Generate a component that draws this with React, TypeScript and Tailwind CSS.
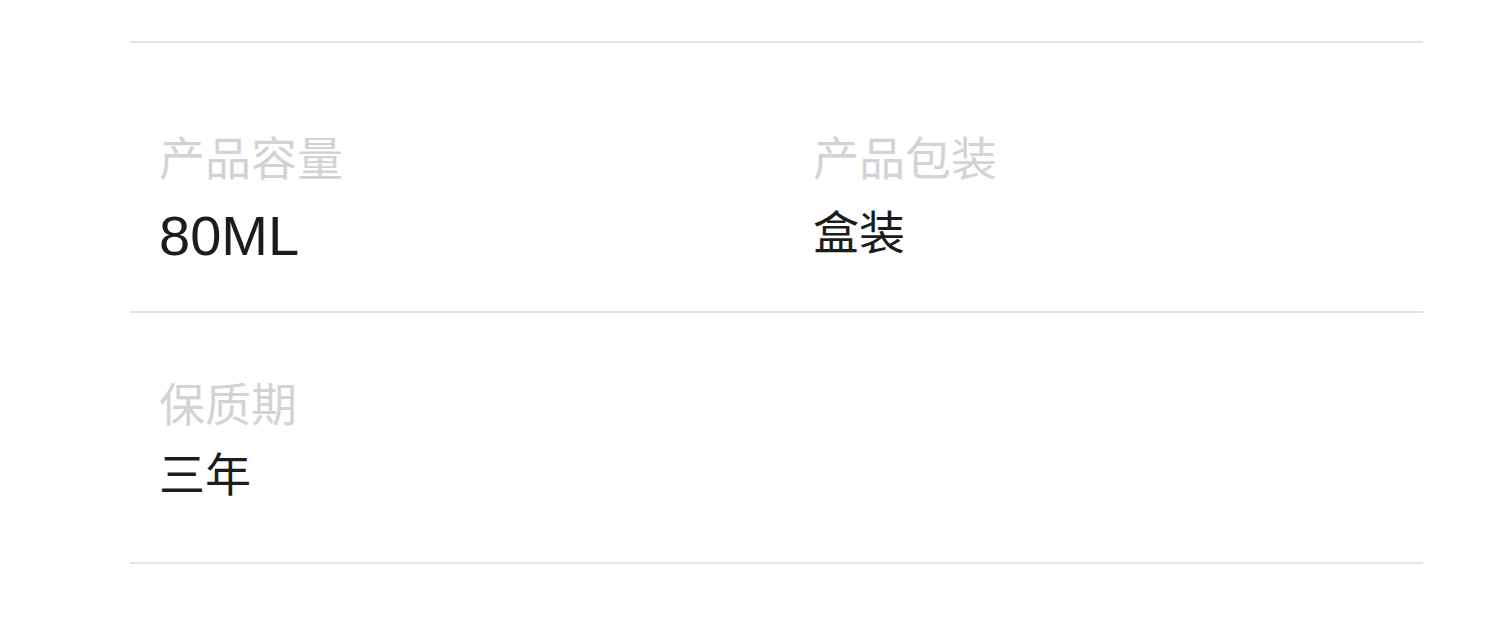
import React from "react";

type Spec = { label: string; value: string; latin?: boolean };

const rows: Spec[][] = [
  [
    { label: "产品容量", value: "80ML", latin: true },
    { label: "产品包装", value: "盒装" },
  ],
  [{ label: "保质期", value: "三年" }],
];

const cjk = "font-['Noto_Sans_CJK_SC',sans-serif]";

function Cell({ spec, gap }: { spec: Spec; gap: string }) {
  return (
    <div className={`flex flex-col ${gap}`}>
      <div className={`${cjk} text-[46px] leading-[46px] text-[#d3d3d6]`}>{spec.label}</div>
      {spec.latin ? (
        <div className="font-['Liberation_Sans','Noto_Sans_CJK_SC',sans-serif] text-[56px] leading-[60px] text-[#1c1c1c]">
          {spec.value}
        </div>
      ) : (
        <div className={`${cjk} text-[46px] leading-[46px] text-[#1c1c1c]`}>{spec.value}</div>
      )}
    </div>
  );
}

export default function App() {
  return (
    <div className="w-[1500px] h-[632px] bg-white pt-[41px] pl-[130px]">
      <div className="w-[1293px] border-t-2 border-[#e4e4e4]">
        {/* 第一行 */}
        <div className="h-[270px] border-b-2 border-[#e4e4e4] pt-[89px] pl-[29px] grid grid-cols-[654px_1fr] items-start">
          {rows[0].map((s) => (
            <Cell key={s.label} spec={s} gap="gap-[28px]" />
          ))}
        </div>
        {/* 第二行 */}
        <div className="h-[251px] border-b-2 border-[#e4e4e4] pt-[65px] pl-[29px] grid grid-cols-[654px_1fr] items-start">
          {rows[1].map((s) => (
            <Cell key={s.label} spec={s} gap="gap-[24px]" />
          ))}
        </div>
      </div>
    </div>
  );
}
